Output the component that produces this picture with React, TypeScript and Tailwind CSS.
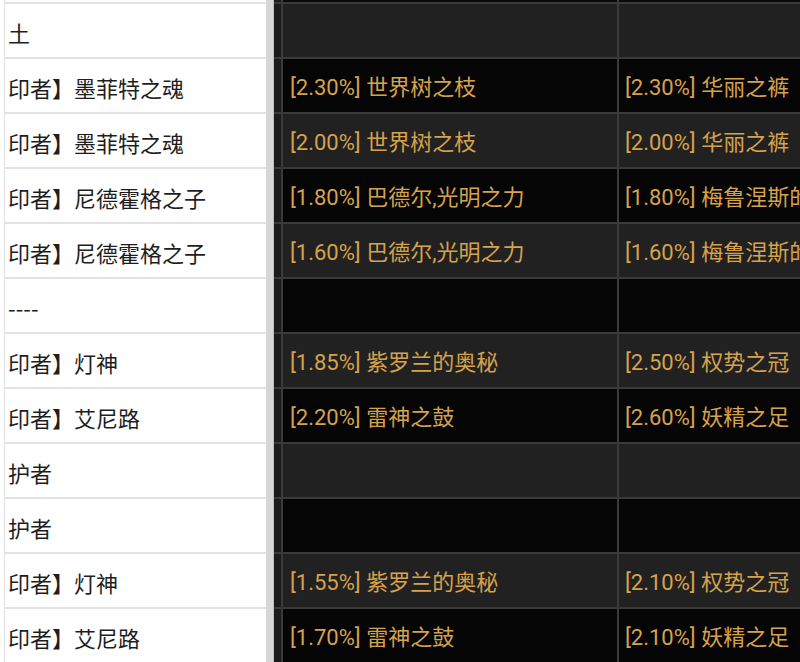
import React from "react";

type Row = { left: string; a: string; b: string };

const rows: Row[] = [
  { left: "土", a: "", b: "" },
  { left: "印者】墨菲特之魂", a: "[2.30%] 世界树之枝", b: "[2.30%] 华丽之裤" },
  { left: "印者】墨菲特之魂", a: "[2.00%] 世界树之枝", b: "[2.00%] 华丽之裤" },
  { left: "印者】尼德霍格之子", a: "[1.80%] 巴德尔,光明之力", b: "[1.80%] 梅鲁涅斯的宝" },
  { left: "印者】尼德霍格之子", a: "[1.60%] 巴德尔,光明之力", b: "[1.60%] 梅鲁涅斯的宝" },
  { left: "----", a: "", b: "" },
  { left: "印者】灯神", a: "[1.85%] 紫罗兰的奥秘", b: "[2.50%] 权势之冠" },
  { left: "印者】艾尼路", a: "[2.20%] 雷神之鼓", b: "[2.60%] 妖精之足" },
  { left: "护者", a: "", b: "" },
  { left: "护者", a: "", b: "" },
  { left: "印者】灯神", a: "[1.55%] 紫罗兰的奥秘", b: "[2.10%] 权势之冠" },
  { left: "印者】艾尼路", a: "[1.70%] 雷神之鼓", b: "[2.10%] 妖精之足" },
];

const cjk = { fontFamily: "'Noto Sans CJK SC', 'Noto Sans', sans-serif" };
const mixed = { fontFamily: "Roboto, 'Noto Sans CJK SC', sans-serif" };

export default function App() {
  return (
    <div className="flex h-[662px] w-[800px] overflow-hidden bg-white">
      {/* left panel */}
      <div className="flex w-[266px] shrink-0 flex-col bg-white">
        <div className="h-[2px] shrink-0 pl-[4px]">
          <div className="h-full border-l border-[#dcdcdc]" />
        </div>
        {rows.map((r, i) => (
          <div key={i} className="flex h-[55px] shrink-0 pl-[4px]">
            <div
              className="flex flex-1 items-center overflow-hidden whitespace-nowrap border-l border-t-2 border-[#e2e2e2] pl-[3px] pt-[3px] text-[22px] text-[#1e1e1e]"
              style={cjk}
            >
              {r.left}
            </div>
          </div>
        ))}
      </div>
      {/* splitter */}
      <div className="w-[8px] shrink-0 border-r border-[#bdbdbd] bg-[#d6d6d6]" />
      {/* right panel */}
      <div className="flex flex-1 flex-col overflow-hidden bg-[#050505]">
        <div className="flex h-[2px] shrink-0">
          <div className="w-[7px] bg-[#1a1a1a]" />
          <div className="w-[336px] border-l-2 border-[#3a3a3a] bg-[#0a0a0a]" />
          <div className="flex-1 border-l-2 border-[#3a3a3a] bg-[#0a0a0a]" />
        </div>
        {rows.map((r, i) => {
          const bg = i % 2 === 0 ? "bg-[#212121]" : "bg-[#050505]";
          return (
            <div
              key={i}
              className={`flex h-[55px] shrink-0 border-t-2 border-[#3a3a3a] ${bg}`}
            >
              <div className="w-[7px] shrink-0 bg-[#1a1a1a]" />
              <div
                className="flex w-[336px] shrink-0 items-center overflow-hidden whitespace-nowrap border-l-2 border-[#3a3a3a] pl-[7px] pt-[3px] text-[22px] text-[#d6a24c]"
                style={mixed}
              >
                {r.a}
              </div>
              <div
                className="flex flex-1 items-center overflow-hidden whitespace-nowrap border-l-2 border-[#3a3a3a] pl-[6px] pt-[3px] text-[22px] text-[#d6a24c]"
                style={mixed}
              >
                {r.b}
              </div>
            </div>
          );
        })}
      </div>
    </div>
  );
}
